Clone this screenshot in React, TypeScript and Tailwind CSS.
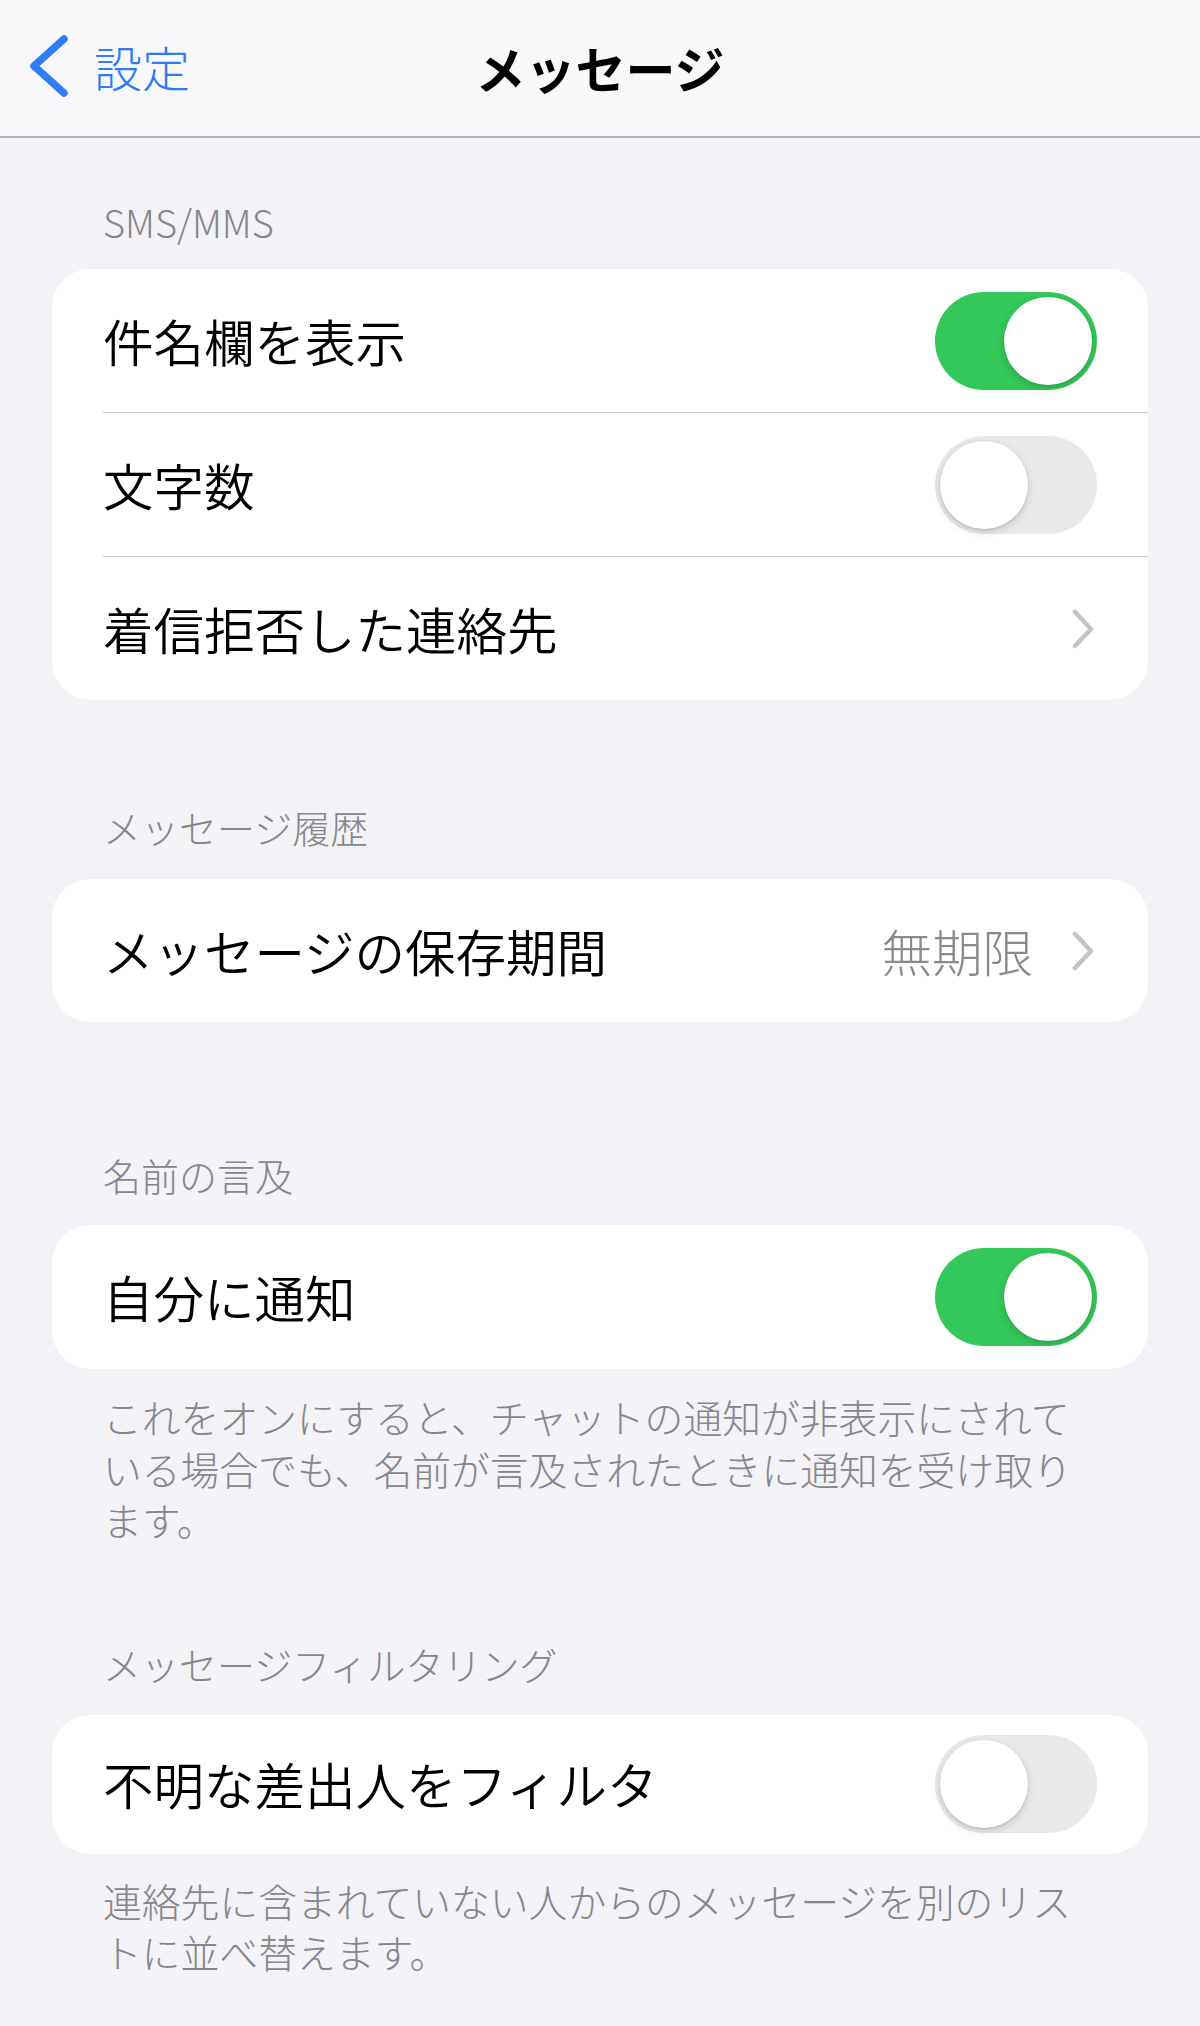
import React from 'react';

const font = { fontFamily: '"Noto Sans CJK JP", "Noto Sans", sans-serif' };

function Toggle({ on }: { on: boolean }) {
    return (
        <div
            className={`relative w-[162px] h-[98px] rounded-full shrink-0 ${on ? 'bg-[#34c759]' : 'bg-[#e9e9eb]'}`}
        >
            <div
                className={`absolute top-[5px] w-[88px] h-[88px] rounded-full bg-white shadow-[0_3px_8px_rgba(0,0,0,0.15),0_1px_2px_rgba(0,0,0,0.12)] ${on ? 'left-[69px]' : 'left-[5px]'}`}
            />
        </div>
    );
}

function Chevron() {
    return (
        <svg width="24" height="40" viewBox="0 0 24 40" className="shrink-0">
            <polyline points="4,3 20,20 4,37" fill="none" stroke="#c4c4c7" strokeWidth="4.5" strokeLinecap="round" strokeLinejoin="round" />
        </svg>
    );
}

function Header({ children, className = '' }: { children: React.ReactNode; className?: string }) {
    return (
        <div className={`px-[103px] text-[38px] leading-[48px] font-light text-[#86868b] ${className}`}>{children}</div>
    );
}

function Footer({ children, className = '' }: { children: React.ReactNode; className?: string }) {
    return (
        <div className={`pl-[103px] pr-[100px] text-[38.8px] leading-[51.5px] font-light text-[#86868b] ${className}`}>{children}</div>
    );
}

function Label({ children }: { children: React.ReactNode }) {
    return <span className="text-[50.5px] font-[350] text-black">{children}</span>;
}

export default function App() {
    return (
        <div className="w-[1200px] min-h-[2026px] bg-[#f2f2f7]" style={font}>
            {/* nav bar */}
            <div className="relative h-[138px] bg-[#f9f9fb] border-b-2 border-[#b4b4b8] flex items-center">
                <div className="flex items-center pl-[28px] pb-[4px]">
                    <svg width="40" height="62" viewBox="0 0 40 62">
                        <polyline points="36,4 6,31 36,58" fill="none" stroke="#2f7cf6" strokeWidth="7.5" strokeLinecap="round" strokeLinejoin="round" />
                    </svg>
                    <span className="ml-[26px] text-[48px] leading-none font-light text-[#2f7cf6]">設定</span>
                </div>
                <div className="absolute inset-x-0 top-0 h-[134px] flex items-center justify-center pointer-events-none">
                    <span className="text-[50px] font-bold text-black leading-none">メッセージ</span>
                </div>
            </div>

            <Header className="pt-[60px] mb-[23px]">SMS/MMS</Header>
            <div className="mx-[52px] bg-white rounded-[38px] overflow-hidden">
                <div className="h-[143px] flex items-center justify-between pl-[51px] pr-[51px]">
                    <Label>件名欄を表示</Label>
                    <Toggle on />
                </div>
                <div className="ml-[51px] border-t border-[#c8c8cc]" />
                <div className="h-[143px] flex items-center justify-between pl-[51px] pr-[51px]">
                    <Label>文字数</Label>
                    <Toggle on={false} />
                </div>
                <div className="ml-[51px] border-t border-[#c8c8cc]" />
                <div className="h-[143px] flex items-center justify-between pl-[51px] pr-[53px]">
                    <Label>着信拒否した連絡先</Label>
                    <Chevron />
                </div>
            </div>

            <Header className="mt-[103px] mb-[28px]">メッセージ履歴</Header>
            <div className="mx-[52px] bg-white rounded-[38px]">
                <div className="h-[143px] flex items-center justify-between pl-[51px] pr-[53px]">
                    <Label>メッセージの保存期間</Label>
                    <div className="flex items-center gap-[38px]">
                        <span className="text-[50.5px] font-light text-[#8a8a8e]">無期限</span>
                        <Chevron />
                    </div>
                </div>
            </div>

            <Header className="mt-[129px] mb-[26px]">名前の言及</Header>
            <div className="mx-[52px] bg-white rounded-[38px]">
                <div className="h-[144px] flex items-center justify-between pl-[51px] pr-[51px]">
                    <Label>自分に通知</Label>
                    <Toggle on />
                </div>
            </div>
            <Footer className="mt-[22px]">
                これをオンにすると、チャットの通知が非表示にされている場合でも、名前が言及されたときに通知を受け取ります。
            </Footer>

            <Header className="mt-[94px] mb-[27px]">メッセージフィルタリング</Header>
            <div className="mx-[52px] bg-white rounded-[38px]">
                <div className="h-[139px] flex items-center justify-between pl-[51px] pr-[51px]">
                    <Label>不明な差出人をフィルタ</Label>
                    <Toggle on={false} />
                </div>
            </div>
            <Footer className="mt-[21px]">
                連絡先に含まれていない人からのメッセージを別のリストに並べ替えます。
            </Footer>
        </div>
    );
}
